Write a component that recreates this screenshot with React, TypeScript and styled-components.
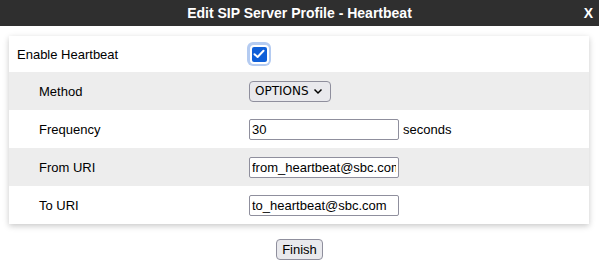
import React, {useState} from 'react'
import styled, {createGlobalStyle} from 'styled-components'

const Global = createGlobalStyle`
  body {
    margin: 0;
    background: #fff;
    font-family: Arial, "Liberation Sans", sans-serif;
    color: #000;
  }
`;

const rows = [
  {label: 'Method', kind: 'select', value: 'OPTIONS'},
  {label: 'Frequency', kind: 'text', value: '30', unit: 'seconds'},
  {label: 'From URI', kind: 'text', value: 'from_heartbeat@sbc.com'},
  {label: 'To URI', kind: 'text', value: 'to_heartbeat@sbc.com'},
];

const App = () => {
  const [enabled, setEnabled] = useState(true);

  return (
    <>
      <Global />
      <TitleBar>
        <Title>Edit SIP Server Profile - Heartbeat</Title>
        <Close>X</Close>
      </TitleBar>
      <Panel>
        <Row $first>
          <Label>Enable Heartbeat</Label>
          <Field>
            <CheckRing onClick={() => setEnabled(!enabled)}>
              <CheckBox $on={enabled}>
                {enabled && (
                  <svg width="12" height="10" viewBox="0 0 12 10">
                    <path d="M1.5 5.2 L4.6 8 L10.5 1.8" fill="none" stroke="#fff" strokeWidth="2" strokeLinecap="round" strokeLinejoin="round" />
                  </svg>
                )}
              </CheckBox>
            </CheckRing>
          </Field>
        </Row>
        {rows.map((r, i) => (
          <Row key={r.label} $shade={i % 2 === 0}>
            <Label $indent>{r.label}</Label>
            <Field>
              {r.kind === 'select' ? (
                <Select>
                  <span>{r.value}</span>
                  <svg width="10" height="7" viewBox="0 0 10 7">
                    <path d="M1.5 1.5 L5 5 L8.5 1.5" fill="none" stroke="#000" strokeWidth="1.5" />
                  </svg>
                </Select>
              ) : (
                <TextInput defaultValue={r.value} />
              )}
              {r.unit && <Unit>{r.unit}</Unit>}
            </Field>
          </Row>
        ))}
      </Panel>
      <Footer>
        <Button>Finish</Button>
      </Footer>
    </>
  )
}

export default App

const TitleBar = styled.div`
  position: relative;
  height: 26px;
  background: #2f2f2f;
  color: #fff;
  display: flex;
  align-items: center;
  justify-content: center;
`;
const Title = styled.div`
  font-weight: bold;
  font-size: 14px;
`;
const Close = styled.div`
  position: absolute;
  right: 6px;
  top: 5px;
  font-weight: bold;
  font-size: 14px;
`;
const Panel = styled.div`
  margin: 10px 10px 0 9px;
  background: #fff;
  box-shadow: 0 2px 6px rgba(0, 0, 0, 0.22);
`;
const Row = styled.div<{$first?: boolean; $shade?: boolean}>`
  display: grid;
  grid-template-columns: 240px 1fr;
  align-items: center;
  height: ${p => (p.$first ? 36 : 38)}px;
  background: ${p => (p.$shade ? '#ededed' : '#fff')};
`;
const Label = styled.div<{$indent?: boolean}>`
  padding-left: ${p => (p.$indent ? 30 : 8)}px;
  font-size: 13px;
`;
const Field = styled.div`
  display: flex;
  align-items: center;
`;
const CheckRing = styled.div`
  width: 24px;
  height: 24px;
  margin-left: -2px;
  border-radius: 6px;
  background: #b4cbf1;
  display: flex;
  align-items: center;
  justify-content: center;
  cursor: pointer;
`;
const CheckBox = styled.div<{$on: boolean}>`
  width: 19px;
  height: 19px;
  box-sizing: border-box;
  border-radius: 4px;
  border: 2px solid #fff;
  background: ${p => (p.$on ? '#0f5fd8' : '#fff')};
  display: flex;
  align-items: center;
  justify-content: center;
`;
const Select = styled.div`
  box-sizing: border-box;
  height: 21px;
  width: 82px;
  padding: 0 7px 0 5px;
  display: flex;
  align-items: center;
  justify-content: space-between;
  border: 1px solid #8f8f9d;
  border-radius: 4px;
  background: #e9e9ed;
  font-size: 12px;
  font-weight: normal;
  font-family: "DejaVu Sans", Verdana, sans-serif;
`;
const TextInput = styled.input`
  box-sizing: border-box;
  width: 150px;
  height: 21px;
  padding: 0 2px;
  border: 1px solid #8f8f9d;
  border-radius: 2px;
  font-size: 13px;
  font-family: Arial, "Liberation Sans", sans-serif;
  color: #000;
  outline: none;
`;
const Unit = styled.span`
  margin-left: 4px;
  font-size: 13px;
`;
const Footer = styled.div`
  display: flex;
  justify-content: center;
  padding-top: 15px;
`;
const Button = styled.button`
  box-sizing: border-box;
  height: 21px;
  padding: 0 5px;
  border: 1px solid #8f8f9d;
  border-radius: 4px;
  background: #e9e9ed;
  font-size: 13px;
  font-family: Arial, "Liberation Sans", sans-serif;
  color: #000;
`;
